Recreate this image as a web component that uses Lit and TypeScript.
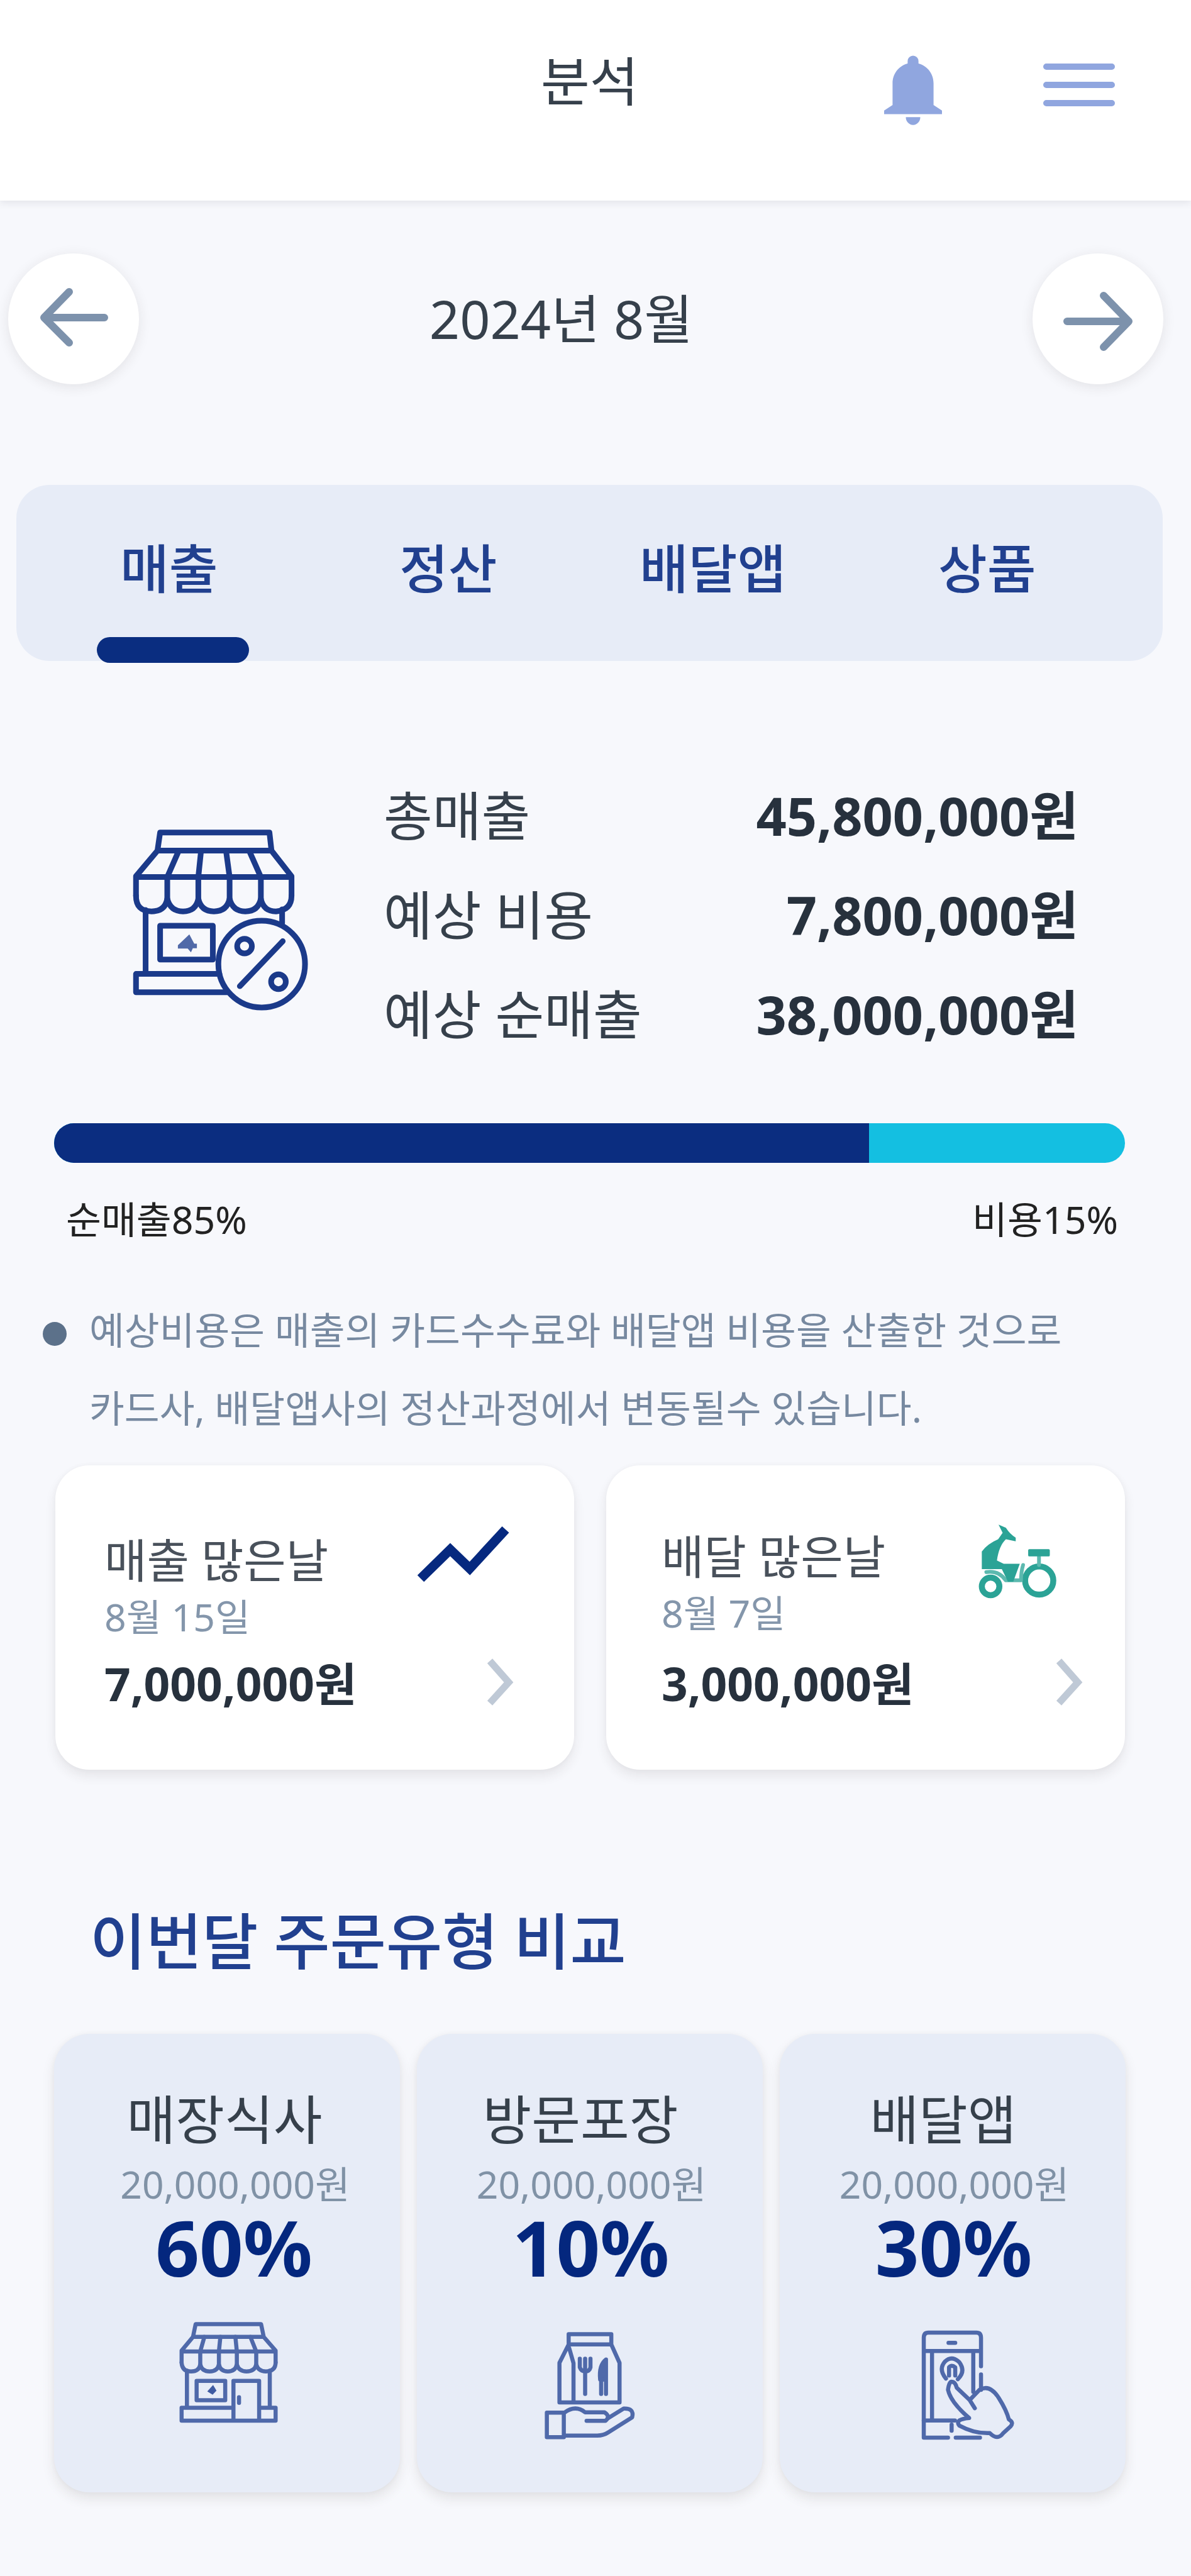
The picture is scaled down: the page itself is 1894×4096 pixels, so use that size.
import { LitElement, html, css, svg } from "lit";
import { customElement } from "lit/decorators.js";

const tabs = ["매출", "정산", "배달앱", "상품"];

const totals = [
  { label: "총매출", value: "45,800,000원" },
  { label: "예상 비용", value: "7,800,000원" },
  { label: "예상 순매출", value: "38,000,000원" },
];

const bellIcon = svg`<svg class="bell" viewBox="0 0 96 116">
  <path d="M48 0a9 9 0 0 1 9 9v4c15 4 25 17 25 33v36l14 9v6H0v-6l14-9V46c0-16 10-29 25-33V9a9 9 0 0 1 9-9z"/>
  <path d="M36 102h24a12 13 0 0 1-24 0z"/></svg>`;

const menuIcon = svg`<svg class="menu" viewBox="0 0 118 72">
  <path d="M7 7H111M7 36H111M7 65H111"/></svg>`;

const arrowLeft = svg`<svg class="arrow" viewBox="0 0 120 104">
  <path d="M109 50H13M53 9L13 50l40 40"/></svg>`;

const arrowRight = svg`<svg class="arrow" viewBox="0 0 120 104">
  <path d="M11 56h97M69 15l40 41-40 41"/></svg>`;

const chevron = svg`<svg class="chevron" viewBox="0 0 50 90">
  <path d="M11 12l30 34-30 33"/></svg>`;

const trendIcon = svg`<svg class="trend" viewBox="0 0 160 110">
  <path d="M11 94l47-46 31 30 57-62"/></svg>`;

const scooterIcon = svg`<svg class="scooter" viewBox="60 90 420 410">
  <circle cx="141" cy="415" r="43"/>
  <circle cx="379" cy="386" r="69"/>
  <path class="thin" d="M120 345Q180 335 215 385H290Q290 345 300 310"/>
  <path class="thin" d="M378 270V310"/>
  <path class="solid" d="M180 112L216 128Q236 160 264 176V194L216 184Q182 216 172 288L205 304H284L252 392H226L196 330H98V244Q126 206 178 184L200 152Z"/>
  <rect class="solid" x="325" y="232" width="106" height="36" rx="6"/></svg>`;

const storeSaleIcon = svg`<svg class="store-sale" viewBox="0 0 1200 1320">
  <path d="M232 325L245 236H780L790 325ZM232 325L127 450V545M790 325L888 450V545M127 454H888"/>
  <path d="M335 328L280 454V560M445 328L432 454V560M568 328L585 454V560M682 328L738 454V560"/>
  <path d="M127 545Q127 622 203 622Q270 622 280 560Q295 622 357 622Q420 622 432 560Q445 622 508 622Q572 622 585 560Q600 622 662 622Q725 622 738 560Q750 622 812 622Q888 615 888 545"/>
  <path d="M174 615V925M842 612V680M245 692H503V858H245ZM535 928H127V1018H575"/>
  <path class="solid" d="M388 735L412 780H425V802H405L396 822L380 804H332V788Z"/>
  <circle cx="742" cy="880" r="212"/>
  <circle cx="658" cy="792" r="36"/><circle cx="824" cy="966" r="36"/>
  <path d="M845 768L635 988"/></svg>`;

const storeIcon = svg`<svg class="type-icon store" viewBox="570 250 450 540" preserveAspectRatio="none">
  <path d="M645 345L656 282H926L937 345ZM645 345L598 412V470M937 345L986 412V470M598 416H986"/>
  <path d="M692 345L675 416V480M758 345L752 416V480M820 345L826 416V480M882 345L906 416V480"/>
  <path d="M598 470Q600 514 637 514Q670 514 675 480Q682 514 714 514Q746 514 752 480Q758 514 789 514Q820 514 826 480Q834 514 866 514Q900 514 906 480Q914 514 946 514Q986 512 986 470"/>
  <path d="M620 510V690M962 510V690M660 560H778V655H660ZM812 755V560H918V755M812 692H598V755H986V692H918"/>
  <path d="M835 640V668"/>
  <path class="solid" d="M728 580L742 608L726 628L704 612Z"/></svg>`;

const takeoutIcon = svg`<svg class="type-icon takeout" viewBox="550 280 430 600" preserveAspectRatio="none">
  <path d="M678 328H854V378H678ZM678 378L640 468V662H888V468L854 378M680 395L698 470V662"/>
  <path d="M724 448V490Q730 510 746 510Q764 510 768 490V448M746 448V620"/>
  <path class="filled" d="M832 620V452Q802 480 808 550H830M812 560V620"/>
  <path d="M588 712H658V832H588ZM660 712Q706 672 746 710H826Q852 730 830 752H752"/>
  <path d="M842 738L905 692Q950 690 940 735L842 808Q822 824 796 824H660"/></svg>`;

const phoneIcon = svg`<svg class="type-icon phone" viewBox="570 280 430 600" preserveAspectRatio="none">
  <path d="M836 485V345Q836 320 818 320H632Q614 320 614 345V834H708M738 834H832M836 525V600M614 410H836M710 370H736"/>
  <path d="M646 410V750M806 410V610M614 750H735M722 770V800"/>
  <path d="M708 600Q712 560 722 560Q736 560 742 590L792 650L830 600Q870 570 905 640Q935 700 944 745Q965 760 950 780L922 812Q900 850 870 812Q810 815 752 775Q732 745 790 738Q718 660 708 600ZM792 650L812 690"/>
  <path d="M700 545Q670 500 696 462Q722 430 752 465Q778 510 746 548M712 530V490Q722 475 736 490V530"/></svg>`;

const orderTypes = [
  { key: "dine", name: "매장식사", amount: "20,000,000원", share: "60%", icon: storeIcon },
  { key: "pickup", name: "방문포장", amount: "20,000,000원", share: "10%", icon: takeoutIcon },
  { key: "app", name: "배달앱", amount: "20,000,000원", share: "30%", icon: phoneIcon },
];

@customElement("app-root")
export class AppRoot extends LitElement {
  static styles = css`
    :host {
      display: block;
      width: 1894px;
      height: 4096px;
      overflow: hidden;
      background: #f7f8fc;
      color: #36404b;
      font-family: "Noto Sans", "Noto Sans CJK KR", sans-serif;
      font-size: 84.5px;
      white-space: nowrap;
    }
    * { box-sizing: border-box; }
    svg { display: block; flex: none; fill: none; stroke-linecap: round; stroke-linejoin: round; }
    svg * { vector-effect: non-scaling-stroke; }
    .header {
      display: flex;
      align-items: flex-start;
      height: 319px;
      padding-left: 860px;
      background: #fff;
      box-shadow: 0 3px 12px rgba(40, 40, 60, 0.1);
    }
    .title { width: 546px; margin-top: 69px; line-height: 120px; }
    .bell { width: 92px; height: 112px; margin-top: 88px; fill: #90a6df; }
    .menu { width: 118px; height: 72px; margin: 99px 0 0 159px; stroke: #90a6df; stroke-width: 10; }
    .month { display: flex; align-items: center; height: 208px; margin: 84px 44px 0 13px; }
    .round {
      display: flex;
      align-items: center;
      justify-content: center;
      width: 208px;
      height: 208px;
      border-radius: 50%;
      background: #fff;
      box-shadow: 0 4px 20px rgba(50, 40, 40, 0.1);
    }
    .arrow { width: 120px; height: 104px; stroke: #7d92ac; stroke-width: 12; }
    .date { width: 960px; margin-left: 462px; line-height: 120px; }
    .tabs {
      display: grid;
      grid-template-columns: 444px 382px 475px 1fr;
      width: 1823px;
      height: 280px;
      margin: 160px 0 0 26px;
      padding-left: 165px;
      border-radius: 53px;
      background: #e7ecf7;
      color: #21408f;
      font-weight: 500;
      line-height: 266px;
    }
    .tab { position: relative; }
    .active::after {
      content: "";
      position: absolute;
      left: -37px;
      top: 242px;
      width: 242px;
      height: 41px;
      border-radius: 21px;
      background: #0a2d80;
    }
    .summary { display: flex; margin-top: 167px; padding: 0 179px 0 175px; }
    .store-sale { width: 390px; height: 429px; margin-top: 29px; stroke: #1b3a8a; stroke-width: 9; }
    .store-sale .solid { fill: #5069a8; stroke: none; }
    .totals { flex: 1; margin-left: 45px; }
    .total { display: flex; justify-content: space-between; line-height: 158px; }
    .total b { font-weight: 700; color: #27313d; }
    .bar { display: flex; width: 1703px; height: 63px; margin: 94px 0 0 86px; border-radius: 32px; overflow: hidden; background: #14bfe1; }
    .net { background: #0b2d80; }
    .legend { display: flex; justify-content: space-between; margin: 50px 116px 0 105px; color: #222; font-size: 60.8px; line-height: 80px; }
    .note { display: flex; margin: 74px 0 0 68px; color: #7789a0; font-size: 60.7px; line-height: 123.5px; }
    .dot { width: 38px; height: 38px; margin: 49px 36px 0 0; border-radius: 50%; background: #5c718a; }
    .days { display: flex; gap: 51px; margin: 30px 0 0 88px; }
    .day { display: flex; justify-content: space-between; width: 825px; height: 484px; border-radius: 54px; background: #fff; box-shadow: 0 10px 18px rgba(50, 40, 40, 0.09), 0 0 8px rgba(50, 40, 40, 0.03); }
    .day-text { margin: 106px 0 0 78px; line-height: 90px; }
    .day-name { font-size: 73.3px; color: #49515b; }
    .day-date { font-size: 60.8px; color: #8496ab; }
    .day-sum { margin-top: 16px; font-size: 73px; font-weight: 700; color: #27313d; }
    .day-icons { display: flex; flex-direction: column; align-items: flex-end; }
    .sales .day-icons { margin-right: 95px; }
    .delivery .day-text { margin: 100px 0 0 88px; }
    .delivery .day-sum { margin-top: 22px; }
    .delivery .day-icons { margin-right: 66px; }
    .trend { width: 160px; height: 110px; margin-top: 86px; stroke: #06297f; stroke-width: 15; stroke-linecap: butt; stroke-linejoin: miter; }
    .chevron { width: 50px; height: 90px; margin-top: 103px; stroke: #bfc9d6; stroke-width: 11; stroke-linecap: butt; stroke-linejoin: miter; }
    .scooter { width: 136.4px; height: 133.2px; margin: 87px 38px 0 0; stroke: #2ba396; stroke-width: 9.5; }
    .scooter .thin { stroke-width: 6; stroke: #5cb9af; }
    .scooter .solid { fill: #2ba396; stroke: none; }
    .delivery .chevron { margin-top: 79px; }
    .heading { margin: 211px 0 0 143px; color: #21408f; font-size: 96.9px; font-weight: 500; line-height: 120px; }
    .types { display: flex; gap: 27px; margin: 89px 0 0 86px; }
    .type { display: flex; flex-direction: column; align-items: center; width: 550px; height: 729px; padding-top: 80px; border-radius: 56px; background: #e7ecf7; box-shadow: 0 10px 20px rgba(50, 40, 30, 0.1), 0 0 8px rgba(50, 40, 40, 0.03); }
    .type-name { margin-right: 8px; line-height: 112px; }
    .pickup .type-name, .app .type-name { margin-right: 30px; }
    .type-sum { margin-left: 26px; color: #8092a6; font-size: 60.6px; line-height: 94px; }
    .share { margin-left: 22px; color: #04277e; font-size: 122px; font-weight: 700; line-height: 106px; }
    .pickup .type-sum, .app .type-sum { margin-left: 5px; }
    .pickup .share, .app .share { margin-left: 3px; }
    .type-icon { stroke: #4f69aa; stroke-width: 6.5; }
    .type-icon .solid { fill: #3f5ba2; stroke: none; }
    .type-icon .filled { fill: #4f69aa; }
    .store { width: 173.4px; height: 175.4px; margin: 59px 0 0 8px; }
    .takeout { width: 165.7px; height: 194.9px; margin: 70px 0 0 0; }
    .phone { width: 176.3px; height: 194.9px; margin: 70px 0 0 48px; }
  `;

  render() {
    return html`
      <header class="header">
        <div class="title">분석</div>
        ${bellIcon}${menuIcon}
      </header>
      <div class="month">
        <div class="round">${arrowLeft}</div>
        <div class="date">2024년 8월</div>
        <div class="round">${arrowRight}</div>
      </div>
      <nav class="tabs">
        ${tabs.map((t, i) => html`<div class="tab ${i === 0 ? "active" : ""}">${t}</div>`)}
      </nav>
      <section class="summary">
        ${storeSaleIcon}
        <div class="totals">
          ${totals.map((t) => html`<div class="total"><span>${t.label}</span><b>${t.value}</b></div>`)}
        </div>
      </section>
      <div class="bar"><div class="net" style="width: 76.1%"></div></div>
      <div class="legend"><span>순매출85%</span><span>비용15%</span></div>
      <div class="note">
        <span class="dot"></span>
        <div>예상비용은 매출의 카드수수료와 배달앱 비용을 산출한 것으로<br />카드사, 배달앱사의 정산과정에서 변동될수 있습니다.</div>
      </div>
      <section class="days">
        <article class="day sales">
          <div class="day-text">
            <div class="day-name">매출 많은날</div>
            <div class="day-date">8월 15일</div>
            <div class="day-sum">7,000,000원</div>
          </div>
          <div class="day-icons">${trendIcon}${chevron}</div>
        </article>
        <article class="day delivery">
          <div class="day-text">
            <div class="day-name">배달 많은날</div>
            <div class="day-date">8월 7일</div>
            <div class="day-sum">3,000,000원</div>
          </div>
          <div class="day-icons">${scooterIcon}${chevron}</div>
        </article>
      </section>
      <div class="heading">이번달 주문유형 비교</div>
      <section class="types">
        ${orderTypes.map(
          (o) => html`<article class="type ${o.key}">
            <div class="type-name">${o.name}</div>
            <div class="type-sum">${o.amount}</div>
            <div class="share">${o.share}</div>
            ${o.icon}
          </article>`
        )}
      </section>
    `;
  }
}
